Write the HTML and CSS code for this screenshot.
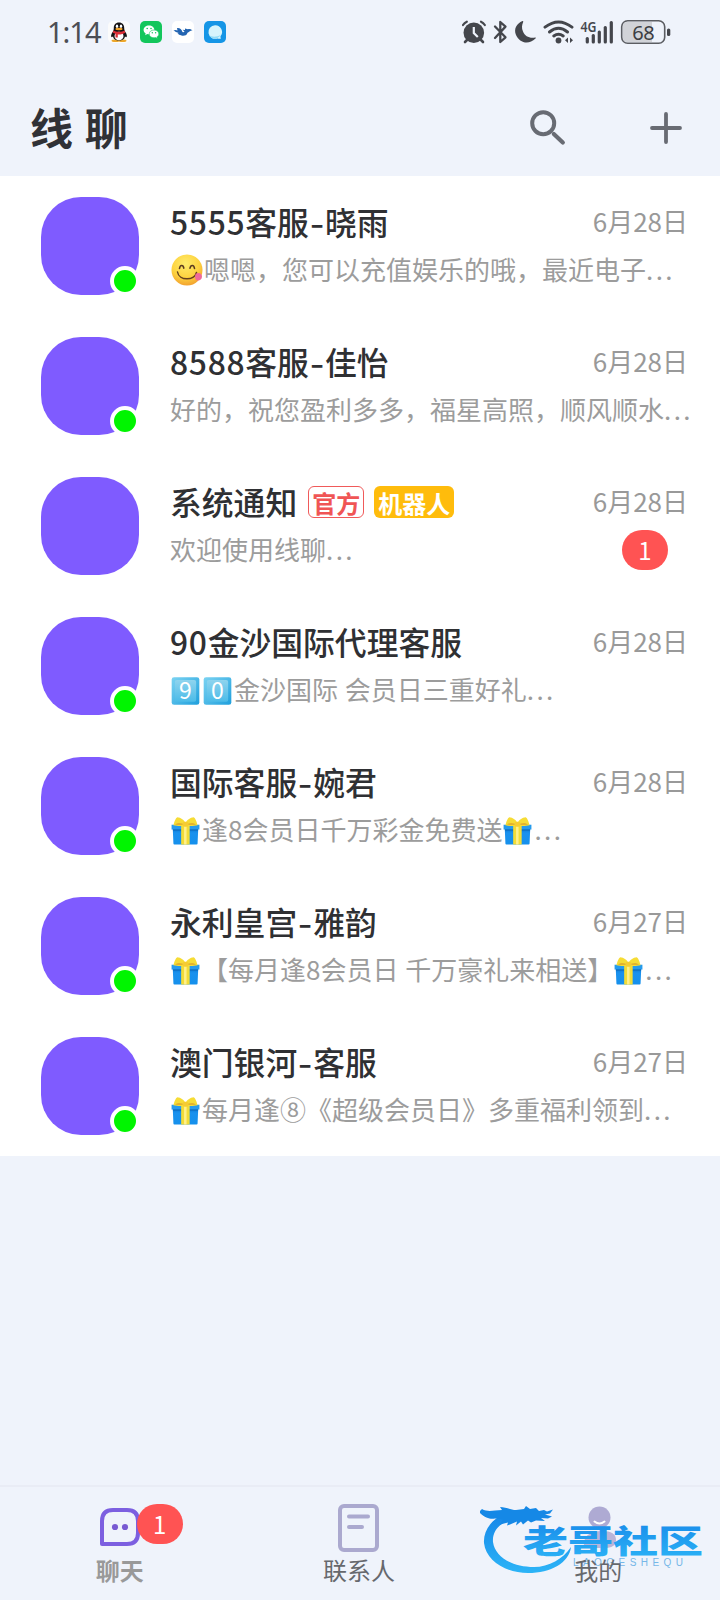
FILE: index.html
```html
<!DOCTYPE html>
<html lang="zh-CN">
<head>
<meta charset="utf-8">
<title>线聊</title>
<link rel="stylesheet" href="styles.css">
</head>
<body>
<svg class="defs" width="0" height="0">
  <defs>
    <linearGradient id="boxBlue" x1="0" y1="0" x2="0" y2="1"><stop offset="0" stop-color="#0b75cf"/><stop offset=".3" stop-color="#1a91ee"/><stop offset="1" stop-color="#1590ec"/></linearGradient>
    <linearGradient id="keyBlue" x1="0" y1="0" x2="1" y2="1"><stop offset="0" stop-color="#7bd3f2"/><stop offset="1" stop-color="#1f9fdc"/></linearGradient>
    <linearGradient id="keyInner" x1="0" y1="0" x2="0" y2="1"><stop offset="0" stop-color="#8fd4ee"/><stop offset="1" stop-color="#4bbbe8"/></linearGradient>
    <radialGradient id="face" cx=".45" cy=".3" r=".75"><stop offset="0" stop-color="#ffec6a"/><stop offset=".6" stop-color="#fdd23f"/><stop offset="1" stop-color="#f0992c"/></radialGradient>
    <symbol id="gift" viewBox="0 0 30 30">
      <path d="M1.800 12h26.400l-.7 16a1 1 0 0 1-1 1h-23a1 1 0 0 1-1-1z" fill="url(#boxBlue)"/>
      <path d="M.6 8.500h28.800v5H.6z" fill="#259bed"/>
      <path d="M2 13.500h26v1H2z" fill="#0c67b7"/>
      <path d="M10.500 8.500h8.800V29h-8.800z" fill="#f3dc37"/>
      <path d="M13.500 9h2.600v20h-2.600z" fill="#fff08a"/>
      <path d="M15 9.500C11 10 6 10 2.500 9 3.500 5.500 4.800 1.500 6.500.8 10 .8 14 4 15 7zM15 9.500C19 10 24 10 27.500 9 26.500 5.500 25.200 1.500 23.500.8 20 .8 16 4 15 7z" fill="#f6dc35"/>
      <path d="M12.500 8.500C9 9 6 8.700 4 8.200c2-1.600 5-2.200 8.500-.7zM17.500 8.500c3.500.5 6.500.2 8.500-.3-2-1.600-5-2.200-8.500-.7z" fill="#e3b22e"/>
      <rect x="12" y="5.500" width="6" height="5" rx="2" fill="#f5cc32"/>
    </symbol>
    <symbol id="yum" viewBox="0 0 32 32">
      <circle cx="16" cy="16" r="15.500" fill="url(#face)"/>
      <path d="M8.500 14.500c.5-4 3.800-4 4.300-.3M19 14.200c.7-3.700 4-3.700 4.500.3" fill="none" stroke="#5c3b20" stroke-width="1.600" stroke-linecap="round"/>
      <path d="M6.500 18c1.500 9 17 9 19 .5" fill="none" stroke="#65401d" stroke-width="1.500" stroke-linecap="round"/>
      <path d="M24.600 20c3-2 6.400-.5 6.400 2.700 0 3-3.500 5-5.800 3.300-1.500-1.300-1.500-3.500-.6-6z" fill="#f0699a"/>
    </symbol>
    <symbol id="key" viewBox="0 0 30 30">
      <rect x=".7" y=".7" width="28.600" height="28.600" rx="2.500" fill="url(#keyBlue)"/>
      <rect x="4" y="3.500" width="22" height="22.500" rx="2" fill="url(#keyInner)"/>
    </symbol>
  </defs>
</svg>
<div class="phone">
  <header class="status">
    <div class="status-left">
      <span class="clock">1:14</span>
      <svg class="app-icon" viewBox="0 0 22 22"><rect width="22" height="22" rx="5" fill="#fbfbfb"/><ellipse cx="7.500" cy="19.700" rx="4" ry="1.300" fill="#eda72a"/><ellipse cx="14.500" cy="19.700" rx="4" ry="1.300" fill="#eda72a"/><path d="M11 1.500c3.500 0 5.200 2.400 5.200 5.500 0 2 .5 3 1.500 4.600 1 1.500 1.700 4 .8 4.500-.7.300-1.500-.8-1.500-.8-.3 3-3 4.200-6 4.200s-5.700-1.200-6-4.200c0 0-.8 1.100-1.500.8-.9-.5-.2-3 .8-4.500C5.300 10 5.800 9 5.800 7c0-3.100 1.700-5.500 5.200-5.500z" fill="#151314"/><ellipse cx="11" cy="15" rx="4.500" ry="4.300" fill="#fff"/><ellipse cx="9" cy="5.200" rx="1.200" ry="1.700" fill="#fff"/><ellipse cx="13" cy="5.200" rx="1.200" ry="1.700" fill="#fff"/><ellipse cx="11" cy="8" rx="3.600" ry="1.200" fill="#f2a325"/><path d="M5.300 9.500c3 1.700 8.400 1.700 11.400 0l.6 2.200c-2 1.400-5 1.900-7.500 1.700v3H7.500v-3.600l-2.700-1.100z" fill="#dc3038"/></svg>
      <svg class="app-icon" viewBox="0 0 22 22"><rect width="22" height="22" rx="5" fill="#13c65c"/><path d="M9 4.500c-3 0-5.400 2-5.400 4.400 0 1.500.8 2.700 2.100 3.500l-.6 1.900 2.200-1.200c.6.200 1.200.2 1.700.2 3 0 5.400-2 5.400-4.400S12 4.500 9 4.500z" fill="#fff"/><path d="M14 9c-2.700 0-4.800 1.700-4.800 3.900s2.100 3.900 4.800 3.900c.5 0 1-.1 1.500-.2l1.900 1-.5-1.700c1.200-.7 1.900-1.800 1.900-3C18.800 10.700 16.700 9 14 9z" fill="#fff" stroke="#13c65c" stroke-width=".6"/><g fill="#13c65c"><circle cx="7.200" cy="7.500" r=".8"/><circle cx="11" cy="7.500" r=".8"/><circle cx="12.300" cy="11.800" r=".7"/><circle cx="15.600" cy="11.800" r=".7"/></g></svg>
      <svg class="app-icon" viewBox="0 0 22 22"><rect width="22" height="22" rx="5" fill="#fff"/><path d="M1.500 9.500c1.500-1 3-.5 4 0L5 7c2.500-.5 4.500 1 5.500 4 .8.600 1.500.3 2-.5l-2-1.800 2.500.3L13 7.500l3 .8c1.500-.5 3 0 4.500 1.200-2 0-2.500.5-3.500 1.500-1 .3-1.300.6-1.700 1.200C14.500 14.500 12 15 9.500 14.500 7.500 14 6.500 13.500 5.500 12l2 .2C5.500 11.500 3.500 11 2.500 10z" fill="#2364b1"/></svg>
      <svg class="app-icon" viewBox="0 0 22 22"><rect width="22" height="22" rx="5" fill="#1595e6"/><path d="M11 4.200a6.800 6.800 0 1 0 2.500 13.200c1 .5 2.400.5 3.500.2-.5-.7-.6-1.500-.5-2.300A6.800 6.800 0 0 0 11 4.200z" fill="#d6f4fc"/><path d="M5 14c3 2.500 8 2 11.500 0-1 2-3.500 3.700-6 3.700S6 16 5 14z" fill="#92dcf7"/></svg>
    </div>
    <svg class="status-right" viewBox="462 16 212 32">
      <g fill="#44464c" stroke="none">
        <circle cx="473.800" cy="32.800" r="10.300"/>
        <path d="M467 40l-2 2M481 40l2 2" stroke="#44464c" stroke-width="2.600" fill="none" stroke-linecap="round"/>
        <path d="M463 25q1.500-2.300 3.800-3.300M484.800 25q-1.500-2.300-3.800-3.300" stroke="#44464c" stroke-width="2.200" fill="none" stroke-linecap="round"/>
        <path d="M473.800 27v6l4 4" stroke="#eff3fb" stroke-width="2.200" fill="none"/>
        <path d="M522.500 21c-6 2.500-9 8-6.500 14 3 7 12 11 19.500 3.500.5-.5.300-1-.3-1-5.700 1-10.200-1-12.200-6-1.600-3.500-1.100-6.500.2-9.500.2-.7-.2-1.100-.7-1z"/>
        <circle cx="558.500" cy="40.500" r="2.900"/>
        <path d="M568 37.500v5.500l-3-2.750zM570 37.500v5.500l3-2.750z"/>
        <rect x="585.700" y="37" width="3.200" height="6.400" rx="1.500"/><rect x="591.700" y="34" width="3.200" height="9.400" rx="1.500"/><rect x="597.700" y="30.500" width="3.200" height="12.900" rx="1.500"/><rect x="603.700" y="26" width="3.200" height="17.400" rx="1.500"/><rect x="609.700" y="21" width="3.200" height="22.400" rx="1.500"/>
        <rect x="667" y="28.500" width="3.300" height="7.500" rx="1.600"/>
      </g>
      <path d="M495 26.500l10.500 10.800-5.200 4.700V22l5.200 4.600L495 38" fill="none" stroke="#44464c" stroke-width="2.300" stroke-linejoin="round" stroke-linecap="round"/>
      <path d="M545 27.200q13.500-10.500 27 0M549.500 32q9-7.300 18 0M553.800 36q4.700-3.500 9.400 0" fill="none" stroke="#44464c" stroke-width="2.900" stroke-linecap="round"/>
      <rect x="621.700" y="20.700" width="43" height="22.600" rx="6" fill="none" stroke="#5b5d62" stroke-width="1.600"/>
      <path d="M627 22h25v20h-25q-4 0-4-4V26q0-4 4-4z" fill="#d1d3d8"/>
      <text x="580.500" y="32" class="net" textLength="16" lengthAdjust="spacingAndGlyphs">4G</text>
      <text x="643.300" y="39.700" class="batt">68</text>
    </svg>
  </header>

  <div class="titlebar">
    <h1>线 聊</h1>
    <div class="actions">
      <svg width="36" height="36" viewBox="0 0 36 36"><circle cx="13.200" cy="13.200" r="11" fill="none" stroke="#686b73" stroke-width="4"/><path d="M23.800 24l9 8.500" stroke="#686b73" stroke-width="4.200" stroke-linecap="round"/></svg>
      <svg width="32" height="32" viewBox="0 0 32 32"><path d="M2 16h28M16 2v28" stroke="#686b73" stroke-width="3.800" stroke-linecap="round"/></svg>
    </div>
  </div>

  <main class="list">
    <article class="row"><div class="avatar"><i class="online"></i></div><div class="body">
      <div class="line"><span class="name"><span class="num">5555</span>客服<span class="dash">-</span>晓雨</span><time>6月28日</time></div>
      <p class="preview"><svg class="emoji face"><use href="#yum"/></svg>嗯嗯，您可以充值娱乐的哦，最近电子<span class="dots">...</span></p></div></article>
    <article class="row"><div class="avatar"><i class="online"></i></div><div class="body">
      <div class="line"><span class="name"><span class="num">8588</span>客服<span class="dash">-</span>佳怡</span><time>6月28日</time></div>
      <p class="preview">好的，祝您盈利多多，福星高照，顺风顺水<span class="dots">...</span></p></div></article>
    <article class="row"><div class="avatar"></div><div class="body">
      <div class="line"><span class="name">系统通知</span><span class="tag official">官方</span><span class="tag robot">机器人</span><time>6月28日</time></div>
      <div class="line second"><p class="preview">欢迎使用线聊<span class="dots">...</span></p><span class="badge">1</span></div></div></article>
    <article class="row"><div class="avatar"><i class="online"></i></div><div class="body">
      <div class="line"><span class="name"><span class="num">90</span>金沙国际代理客服</span><time>6月28日</time></div>
      <p class="preview"><span class="keycap"><svg class="emoji"><use href="#key"/></svg><b>9</b></span><span class="keycap"><svg class="emoji"><use href="#key"/></svg><b>0</b></span>金沙国际<span class="gap"> </span>会员日三重好礼<span class="dots">...</span></p></div></article>
    <article class="row"><div class="avatar"><i class="online"></i></div><div class="body">
      <div class="line"><span class="name">国际客服<span class="dash">-</span>婉君</span><time>6月28日</time></div>
      <p class="preview"><svg class="emoji"><use href="#gift"/></svg>逢8会员日千万彩金免费送<svg class="emoji"><use href="#gift"/></svg><span class="dots">...</span></p></div></article>
    <article class="row"><div class="avatar"><i class="online"></i></div><div class="body">
      <div class="line"><span class="name">永利皇宫<span class="dash">-</span>雅韵</span><time>6月27日</time></div>
      <p class="preview"><svg class="emoji"><use href="#gift"/></svg>【每月逢8会员日<span class="gap"> </span>千万豪礼来相送】<svg class="emoji"><use href="#gift"/></svg><span class="dots">...</span></p></div></article>
    <article class="row"><div class="avatar"><i class="online"></i></div><div class="body">
      <div class="line"><span class="name">澳门银河<span class="dash">-</span>客服</span><time>6月27日</time></div>
      <p class="preview"><svg class="emoji"><use href="#gift"/></svg>每月逢⑧《超级会员日》多重福利领到<span class="dots">...</span></p></div></article>
  </main>

  <nav class="tabs">
    <a class="tab active"><span class="tab-icon"><svg width="40" height="48" viewBox="0 0 40 48"><path d="M2 40V17Q2 6 13 6h14q11 0 11 11v12q0 11-11 11H2z" fill="none" stroke="#7c5fe0" stroke-width="4" stroke-linejoin="round"/><circle cx="15" cy="23" r="3.100" fill="#7759d2"/><circle cx="25" cy="23" r="3.100" fill="#7759d2"/></svg><span class="badge">1</span></span><span class="label">聊天</span></a>
    <a class="tab"><span class="tab-icon"><svg width="41" height="48" viewBox="0 0 41 48"><rect x="2" y="2" width="37" height="44" rx="4" fill="none" stroke="#aba9cf" stroke-width="4"/><path d="M11 12.500h19M11 23h13" stroke="#aba9cf" stroke-width="4" stroke-linecap="round"/></svg></span><span class="label">联系人</span></a>
    <a class="tab"><span class="tab-icon"><svg width="40" height="48" viewBox="0 0 40 48"><circle cx="21.500" cy="13.500" r="11" fill="#aeaad3"/><path d="M16.500 17.500q5 4 10 0" fill="none" stroke="#fff" stroke-width="2" stroke-linecap="round"/><path d="M6 44q-2-17 18-17 14 0 14 9 0 8-12 8z" fill="#b9b4d8"/></svg></span><span class="label">我的</span></a>
    <svg class="watermark" viewBox="480 1495 240 90">
      <defs><linearGradient id="wm" x1="0" y1="0" x2="0" y2="1"><stop offset="0" stop-color="#1686e8"/><stop offset="1" stop-color="#2cb4f7"/></linearGradient></defs>
      <path d="M512 1513C494 1515 483 1529 484 1543c2 18 22 30 44 30 23 0 41-10 43-26-8 12-22 20-37 20-22 0-39-10-41-25-1-12 8-20 22-24z" fill="url(#wm)"/>
      <path d="M482 1509c4 2.500 9 2 13 1.500l7-.5-2-3c6 0 11 3 16 3l8-1 2-3 4 3 6-1 3 3 5-1 3 1.500 6-2-3 4-5 1 7 2-4 2-7-.5 4 3-9-.5-5 2-3-2-5 4-2-3-5 4 1-4-7 3-3 1 1-3-8 2 3-5-8-1c-4 1-10 0-16-6.500z" fill="#1588e6"/>
      <text x="523" y="1552.500" class="wm-main" textLength="180" lengthAdjust="spacingAndGlyphs" fill="url(#wm)">老哥社区</text>
      <text x="573" y="1566" class="wm-sub" textLength="110">LAOGESHEQU</text>
    </svg>
  </nav>
</div>
</body>
</html>
```

FILE: styles.css
```css
* { box-sizing: border-box; }
body {
  margin: 0;
  font-family: "Noto Sans CJK SC", sans-serif;
  background: #eff3fb;
}
.defs { position: absolute; }
.phone {
  width: 720px;
  height: 1600px;
  display: flex;
  flex-direction: column;
  overflow: hidden;
}

/* Status bar */
.status {
  height: 64px;
  padding: 0 46px 0 47px;
  display: flex;
  align-items: center;
  justify-content: space-between;
}
.status-left { display: flex; align-items: center; }
.clock {
  width: 61px;
  font: 29px/40px "Noto Sans", sans-serif;
  letter-spacing: -1px;
  color: #4c4e54;
  white-space: nowrap;
}
.app-icon { width: 22px; height: 22px; margin-right: 10px; flex: none; }
.status-right { width: 212px; height: 32px; flex: none; }
.net { font: 600 14px "Noto Sans", sans-serif; fill: #44464c; }
.batt { font: 20px "Noto Sans", sans-serif; fill: #3c3e43; text-anchor: middle; letter-spacing: -.5px; }

/* Title bar */
.titlebar {
  height: 112px;
  padding: 0 38px 0 30px;
  display: flex;
  align-items: center;
  justify-content: space-between;
}
h1 {
  margin: 12px 0 0;
  font-size: 43px;
  line-height: 60px;
  font-weight: 700;
  word-spacing: 2px;
  color: #303136;
}
.actions { display: flex; align-items: center; gap: 84px; padding-top: 15px; }

/* Conversations */
.list { background: #fff; }
.row { height: 140px; padding: 21px 32px 0 41px; display: flex; gap: 31px; }
.avatar {
  position: relative;
  flex: none;
  width: 98px;
  height: 98px;
  border-radius: 40px;
  background: #7f5bff;
}
.online {
  position: absolute;
  right: -1px;
  bottom: -1px;
  width: 30px;
  height: 30px;
  border: 4px solid #fff;
  border-radius: 50%;
  background: #00f500;
}
.body { flex: 1; min-width: 0; }
.line { display: flex; align-items: center; height: 48px; }
.name {
  font-size: 31.8px;
  line-height: 48px;
  font-weight: 500;
  color: #2f3033;
  white-space: nowrap;
}
.num { letter-spacing: .7px; }
.dash { display: inline-block; width: 16px; text-align: center; transform: scaleX(1.25); }
time { margin-left: auto; font-size: 26px; line-height: 48px; color: #999; white-space: nowrap; }
.preview {
  margin: 0;
  height: 48px;
  font-size: 26px;
  line-height: 48px;
  font-weight: 400;
  color: #9c9c9c;
  white-space: nowrap;
}
.dots { letter-spacing: 2.4px; }
.gap { word-spacing: 1px; }
.emoji { width: 29px; height: 30px; margin: 0 2px 0 1px; vertical-align: -6px; }
.emoji.face { width: 32px; height: 32px; margin-right: 1px; }
.keycap { display: inline-block; position: relative; }
.keycap b {
  position: absolute;
  inset: 0 2px 0 1px;
  text-align: center;
  font-size: 23px;
  font-weight: 400;
  color: #fff;
}
.tag {
  margin-left: 10px;
  height: 32px;
  padding: 0 4px;
  border-radius: 6px;
  font-size: 24px;
  line-height: 33px;
  font-weight: 700;
}
.name + .tag { margin-left: 11px; }
.official { border: 1.5px solid #f05a5a; color: #f05555; padding: 0 3px; line-height: 31px; }
.robot { background: #ffbc0c; color: #fff; }
.line .tag { position: relative; top: 1px; }
.second { justify-content: space-between; height: 48px; padding-right: 20px; }
.badge {
  width: 46px;
  height: 40px;
  border-radius: 20px;
  background: #ff5353;
  color: #fff;
  font-size: 24px;
  line-height: 39px;
  text-align: center;
}
.second .badge { margin-top: 2px; }

/* Bottom tabs */
.tabs {
  position: relative;
  margin-top: auto;
  height: 115px;
  padding-right: 2px;
  border-top: 2px solid #e9ecf5;
  display: grid;
  grid-template-columns: repeat(3, 1fr);
}
.tab { display: flex; flex-direction: column; align-items: center; padding-top: 17px; }
.tab-icon { position: relative; height: 48px; }
.tab-icon svg { display: block; }
.tab-icon .badge { position: absolute; left: 37px; top: 0; }
.label {
  position: relative;
  z-index: 2;
  margin-top: 1px;
  font-size: 24px;
  line-height: 34px;
  color: #66686d;
}
.active .label { font-weight: 700; color: #999; }
.watermark { position: absolute; z-index: 1; left: 480px; top: 8px; width: 240px; height: 90px; }
.wm-main { font: 900 32px "Noto Sans CJK SC", sans-serif; }
.wm-sub { font: 10px "Liberation Sans", sans-serif; fill: #76b7e8; }
```
